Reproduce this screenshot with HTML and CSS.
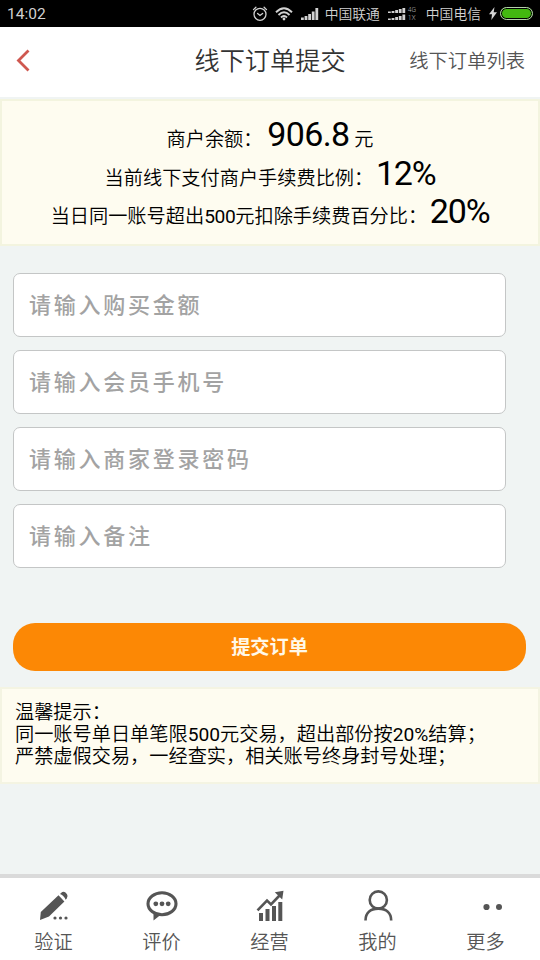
FILE: index.html
```html
<!DOCTYPE html>
<html lang="zh-CN">
<head>
<meta charset="utf-8">
<title>线下订单提交</title>
<link rel="stylesheet" href="styles.css">
</head>
<body>
<div class="status">
  <span class="clock">14:02</span>
  <svg class="alarm" width="16" height="16" viewBox="0 0 16 16" fill="none" stroke="#d2d2d2" stroke-width="1.3" stroke-linecap="round"><circle cx="8" cy="8.3" r="6"/><path d="M1.500 3.600 3.900 1.200M14.500 3.600 12.100 1.200M5.6 7.4 8 9.4 10.6 7.4"/></svg>
  <svg class="wifi" width="18" height="14" viewBox="0 0 18 14" fill="none" stroke="#d2d2d2" stroke-width="1.9"><path d="M1 5.2Q9-2.6 17 5.2M3.5 8Q9 2.6 14.5 8M6 10.5Q9 7.4 12 10.5"/><circle cx="9" cy="12" r="1.4" fill="#d2d2d2" stroke="none"/></svg>
  <svg class="signal" width="18" height="12" viewBox="0 0 18 12" fill="#d2d2d2"><path d="M0 9.5h2.8V12H0zM3.600 8h2.8v4H3.600zM7.200 6h2.800v6H7.200zM10.800 3.500h2.800V12h-2.800zM14.400 0h2.800v12h-2.800z"/></svg>
  <span class="carrier first">中国联通</span>
  <svg class="dual" width="18" height="12" viewBox="0 0 18 12" fill="#d2d2d2"><path d="M0 3.600h2.800v1.400H0zM3.600 3.100h2.800v1.900H3.600zM7.200 2.100h2.800v2.900H7.200zM10.800 1.100h2.800v3.900h-2.800zM14.400 0h2.800v5h-2.800zM0 10.600h2.800V12H0zM3.600 10.100h2.800V12H3.600zM7.200 9.100h2.800V12H7.200zM10.800 8.100h2.800V12h-2.800zM14.400 6.600h2.800V12h-2.800z"/></svg>
  <span class="net"><span>4G</span><span>1X</span></span>
  <span class="carrier second">中国电信</span>
  <svg class="bolt" width="8" height="13" viewBox="0 0 8 13" fill="#d2d2d2"><path d="M5.500 0 0 7.300h3L2.300 13 8 5.300H4.700z"/></svg>
  <span class="battery"></span>
</div>
<header class="header">
  <svg class="back" width="14" height="24" viewBox="0 0 14 24" fill="none" stroke="#cf5850" stroke-width="2.800"><path d="M12.500 1.500 2.500 11.500 12.500 21.500"/></svg>
  <h1 class="title">线下订单提交</h1>
  <a class="list">线下订单列表</a>
</header>
<main class="main">
  <section class="notice">
    <p>商户余额： <b>906.8</b> 元</p>
    <p>当前线下支付商户手续费比例： <b class="rate">12%</b></p>
    <p>当日同一账号超出<span class="num">500</span>元扣除手续费百分比： <b class="rate">20%</b></p>
  </section>
  <form class="form">
    <input class="field" type="text" placeholder="请输入购买金额">
    <input class="field" type="text" placeholder="请输入会员手机号">
    <input class="field" type="text" placeholder="请输入商家登录密码">
    <input class="field" type="text" placeholder="请输入备注">
    <button class="submit" type="button">提交订单</button>
  </form>
  <section class="tips">
    <p>温馨提示：</p>
    <p>同一账号单日单笔限<span class="num">500</span>元交易，超出部份按<span class="num">20%</span>结算；</p>
    <p>严禁虚假交易，一经查实，相关账号终身封号处理；</p>
  </section>
</main>
<nav class="tabs">
  <a class="tab"><svg width="32" height="32" viewBox="0 0 32 32" fill="#555"><path d="M20.500 5.200 26.400 11.500 11 26.500 2 30 2.800 22zM22 4l1.300-1.300Q25.300 1 27.500 2.600L29 4.300Q30.500 6.500 28.800 8.600L27.600 9.800Q26.500 6 22 4z"/><circle cx="17" cy="28" r="1.600"/><circle cx="22.500" cy="28" r="1.600"/><circle cx="28" cy="28" r="1.600"/></svg><span>验证</span></a>
  <a class="tab"><svg width="32" height="32" viewBox="0 0 32 32" fill="#555"><path d="M8.500 23v5.500l5-4" stroke="#555" stroke-width="2"/><ellipse cx="16" cy="13.800" rx="14" ry="11" fill="#fff" stroke="#555" stroke-width="3.100"/><circle cx="9.800" cy="13.800" r="2.400"/><circle cx="16" cy="13.800" r="2.400"/><circle cx="22.200" cy="13.800" r="2.400"/></svg><span>评价</span></a>
  <a class="tab"><svg width="32" height="32" viewBox="0 0 32 32" fill="#555"><path d="M5 23h4v8H5zM11.500 19h4v12h-4zM18 16h4v15h-4zM24.300 12h4v19h-4z"/><path d="M3.500 20.300 13 10.600l4 3.800L26 5" fill="none" stroke="#555" stroke-width="2.600"/><path d="m20.800 2.300 8.700-1.500-1.300 8.600z"/></svg><span>经营</span></a>
  <a class="tab"><svg width="32" height="32" viewBox="0 0 32 32" fill="none" stroke="#555" stroke-width="2.600"><circle cx="16.300" cy="10" r="8.600"/><path d="M3.500 30.500C3.500 22.500 9 18.600 16.300 18.600S29.200 22.500 29.200 30.500"/></svg><span>我的</span></a>
  <a class="tab"><svg width="32" height="32" viewBox="0 0 32 32" fill="#555"><circle cx="16.500" cy="17" r="3.100"/><circle cx="29" cy="17" r="3"/></svg><span>更多</span></a>
</nav>
</body>
</html>
```

FILE: styles.css
```css
* { box-sizing: border-box; margin: 0; padding: 0; }
body {
  width: 540px;
  height: 960px;
  overflow: hidden;
  display: flex;
  flex-direction: column;
  background: #f0f4f3;
  color: #000;
  font-family: Roboto, "Noto Sans CJK SC", sans-serif;
  font-size: 19.2px;
  font-weight: 350;
}
.status {
  height: 27px;
  padding: 0 7px 0 7px;
  display: flex;
  align-items: center;
  flex: none;
  background: #000;
  color: #d2d2d2;
}
.clock { font-size: 15.500px; font-weight: 400; line-height: 25px; margin-right: auto; padding-top: 2px; }
.status svg { flex: none; }
.alarm { margin-right: -1px; }
.wifi { margin-left: 8px; }
.signal { margin-left: 8px; }
.carrier { font-size: 13.800px; line-height: 25px; padding-top: 2px; white-space: nowrap; }
.first { margin-left: 6px; }
.dual { margin-left: 8px; }
.net { display: flex; flex-direction: column; width: 12px; margin-left: 2px; font-size: 6.800px; line-height: 8px; color: #aaa; }
.second { margin-left: 6px; }
.bolt { margin-left: 8px; }
.battery { width: 33px; height: 13px; margin-left: 3px; border: 1px solid #b5cfac; border-radius: 7px; background: #43b810; box-shadow: inset 0 0 0 1px #000; }
.header {
  height: 70px;
  padding: 0 15px 3px 16px;
  display: grid;
  grid-template-columns: 1fr auto 1fr;
  align-items: center;
  flex: none;
  background: #fff;
}
.title { padding: 2px 1px 0 0; font-size: 25.200px; font-weight: 350; color: #333; line-height: 36px; }
.list { padding-top: 3px; justify-self: end; font-size: 19.300px; color: #555; line-height: 30px; }
.main { flex: 1; padding-top: 2px; }
.notice {
  height: 147px;
  padding-top: 14px;
  border: 2px solid #f3f4df;
  background: #fefcf0;
  text-align: center;
  white-space: nowrap;
}
.notice p { height: 38.500px; line-height: 38.500px; }
.notice b { font-size: 34px; font-weight: 400; line-height: 38px; letter-spacing: -0.600px; }
.notice .rate { margin-left: -2px; letter-spacing: -1.200px; }
.num { font-weight: 400; }
.notice .num { letter-spacing: -0.400px; }
.form { display: flex; flex-direction: column; gap: 13px; padding: 27px 14px 16px 13px; }
.field {
  width: 493px;
  height: 64px;
  padding: 0 15px;
  border: 1.500px solid #c4c6c6;
  border-radius: 7px;
  background: #fff;
  font: 500 22px Roboto, "Noto Sans CJK SC", sans-serif;
  letter-spacing: 2.750px;
}
.field::placeholder { color: #a3a3a3; }
.submit {
  height: 48px;
  margin-top: 42px;
  padding-bottom: 3px;
  border: 0;
  border-radius: 22px;
  background: #fc8805;
  color: #fff8e8;
  font: 700 19.200px Roboto, "Noto Sans CJK SC", sans-serif;
}
.tips {
  height: 97px;
  padding: 13px 13px 0;
  border: 2px solid #f4f4e2;
  background: #fefcf0;
  white-space: nowrap;
}
.tips p { height: 22px; line-height: 22px; }
.tabs {
  height: 86px;
  display: grid;
  grid-template-columns: repeat(5, 1fr);
  flex: none;
  border-top: 4px solid #dadada;
  background: #fff;
}
.tab { display: flex; flex-direction: column; align-items: center; padding: 12px 1px 0 0; color: #555; line-height: 28px; }
.tab span { margin-top: 7px; }
```
